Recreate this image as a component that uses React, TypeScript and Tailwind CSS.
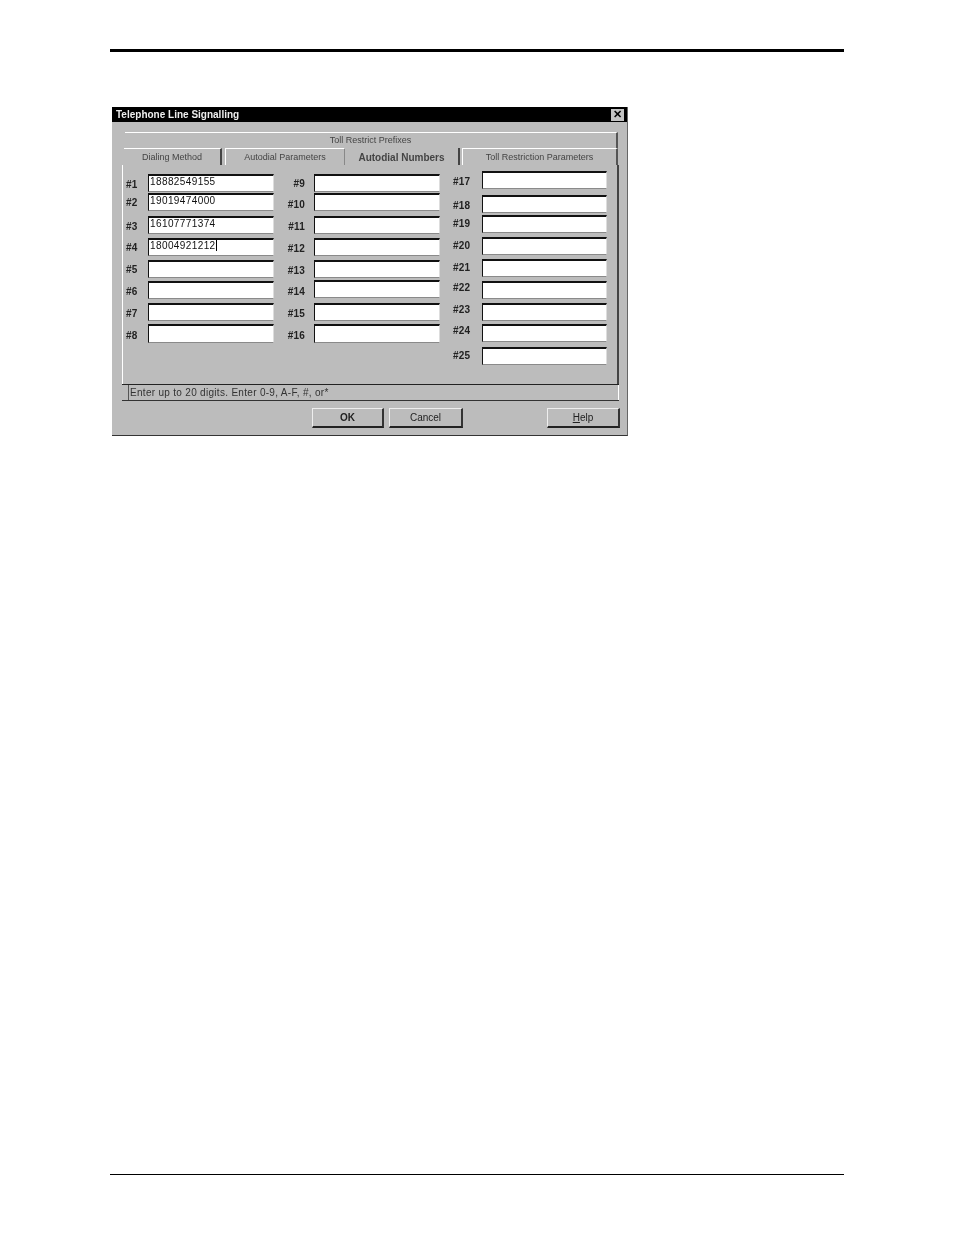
const c1 = [
  ["#1", "18882549155", "h-[18px] mt-0", "mt-[5px]"],
  ["#2", "19019474000", "h-[18px] mt-[1px]", "mt-[4px]"],
  ["#3", "16107771374", "h-[18px] mt-[5px]", "mt-[5px]"],
  ["#4", "18004921212", "h-[18px] mt-[4px]", "mt-[4px]"],
  ["#5", "", "h-[18px] mt-[4px]", "mt-[4px]"],
  ["#6", "", "h-[18px] mt-[3px]", "mt-[5px]"],
  ["#7", "", "h-[18px] mt-[4px]", "mt-[5px]"],
  ["#8", "", "h-[19px] mt-[3px]", "mt-[6px]"],
];
const c2 = [
  ["#9", "", "h-[18px] mt-0", "mt-[4px]"],
  ["#10", "", "h-[18px] mt-[1px]", "mt-[6px]"],
  ["#11", "", "h-[18px] mt-[5px]", "mt-[5px]"],
  ["#12", "", "h-[18px] mt-[4px]", "mt-[5px]"],
  ["#13", "", "h-[18px] mt-[4px]", "mt-[5px]"],
  ["#14", "", "h-[18px] mt-[2px]", "mt-[6px]"],
  ["#15", "", "h-[18px] mt-[5px]", "mt-[5px]"],
  ["#16", "", "h-[19px] mt-[3px]", "mt-[6px]"],
];
const c3 = [
  ["#17", "", "h-[18px] mt-0", "mt-[5px]"],
  ["#18", "", "h-[18px] mt-[6px]", "mt-[5px]"],
  ["#19", "", "h-[18px] mt-[2px]", "mt-[3px]"],
  ["#20", "", "h-[18px] mt-[4px]", "mt-[3px]"],
  ["#21", "", "h-[18px] mt-[4px]", "mt-[3px]"],
  ["#22", "", "h-[18px] mt-[4px]", "mt-[1px]"],
  ["#23", "", "h-[18px] mt-[4px]", "mt-[1px]"],
  ["#24", "", "h-[18px] mt-[3px]", "mt-[1px]"],
  ["#25", "", "h-[18px] mt-[5px]", "mt-[3px]"],
];

function Column({ rows, labelW, inputW, cls }: { rows: string[][]; labelW: string; inputW: string; cls: string }) {
  return (
    <div className={`flex flex-col ${cls}`}>
      {rows.map(([label, value, rowCls, labelCls]) => (
        <div key={label} className={`flex items-start ${rowCls}`}>
          <span className={`${labelW} ${labelCls} text-[10px] leading-[12px] font-bold text-[#222222] tracking-[0.2px] whitespace-nowrap`}>{label}</span>
          <div className={`${inputW} h-full bg-white border-t-2 border-l border-t-[#111111] border-l-[#111111] border-b border-r border-b-[#8a8a8a] border-r-[#dddddd] pl-[1px] text-[10px] leading-[12px] text-[#111111] tracking-[0.4px]`}>
            {label === "#4" ? <span className="border-r border-black">{value}</span> : value}
          </div>
        </div>
      ))}
    </div>
  );
}

function Tab({ children, cls }: { children: React.ReactNode; cls: string }) {
  return <div className={`flex items-center justify-center h-[17px] pt-[2px] text-[9px] text-[#444444] whitespace-nowrap ${cls}`}>{children}</div>;
}

function Btn({ children, cls }: { children: React.ReactNode; cls: string }) {
  return <div className={`flex items-center justify-center h-[20px] text-[10px] text-[#222222] border-t border-l border-t-[#eeeeee] border-l-[#eeeeee] border-b-2 border-r-2 border-b-[#222222] border-r-[#333333] ${cls}`}>{children}</div>;
}

export default function App() {
  return (
    <div className="w-[954px] h-[1235px] bg-white relative overflow-hidden font-['Liberation_Sans',Arial,sans-serif]">
      <div className="flex flex-col px-[110px] pt-[49px] w-[954px]">
        <div className="h-[3px] w-[734px] bg-black" />
        <div className="ml-[2px] mt-[55px] w-[516px] h-[329px] bg-[#bcbcbc] flex flex-col blur-[0.35px] border-b border-b-[#333333] border-r border-r-[#666666]">
          <div className="h-[15px] bg-black flex items-center justify-between pl-[4px] pr-[3px] shrink-0">
            <span className="text-[10px] font-bold text-[#eeeeee]">Telephone Line Signalling</span>
            <span className="w-[13px] h-[12px] bg-[#c4c4c4] flex items-center justify-center text-[11px] leading-none font-bold text-black">✕</span>
          </div>

          <div className="mt-[10px] ml-[13px] mr-[9px] h-[16px] border-t border-t-white border-r-2 border-r-[#555555] flex items-center justify-center text-[9px] text-[#444444] shrink-0">
            <span>Toll Restrict Prefixes</span>
          </div>

          <div className="flex ml-[12px] mr-[9px] shrink-0">
            <Tab cls="w-[98px] border-t border-t-white border-r-2 border-r-[#444444]">Dialing Method</Tab>
            <Tab cls="ml-[3px] w-[120px] border-t border-t-white border-l border-l-white border-r border-r-[#888888]">Autodial Parameters</Tab>
            <Tab cls="w-[115px] text-[10px] font-bold text-[#222222] border-r-2 border-r-[#444444]">Autodial Numbers</Tab>
            <Tab cls="ml-[2px] w-[156px] border-t border-t-white border-l border-l-white border-r-2 border-r-[#555555]">Toll Restriction Parameters</Tab>
          </div>

          <div className="ml-[10px] mr-[8px] h-[219px] border-l border-l-white border-r-2 border-r-[#444444] relative shrink-0 flex items-start pt-[9px] pl-[3px]">
            <Column rows={c1} labelW="w-[22px]" inputW="w-[126px]" cls="" />
            <Column rows={c2} labelW="w-[29px] text-right pr-[9px]" inputW="w-[126px]" cls="ml-[11px]" />
            <Column rows={c3} labelW="w-[29px]" inputW="w-[125px]" cls="ml-[13px] -mt-[3px]" />
          </div>

          <div className="ml-[10px] mr-[8px] h-[17px] border-t border-t-[#222222] border-b border-b-[#333333] pl-[6px] shrink-0">
            <div className="h-full border-l border-l-[#555555] border-r border-r-white pl-[1px] text-[10px] leading-[15px] text-[#333333] tracking-[0.3px]">
              Enter up to 20 digits. Enter 0-9, A-F, #, or*
            </div>
          </div>

          <div className="flex mt-[7px] ml-[200px] shrink-0">
            <Btn cls="w-[72px] border border-[#222222] border-b-2 border-r-2 font-bold">OK</Btn>
            <Btn cls="ml-[5px] w-[74px]">Cancel</Btn>
            <Btn cls="ml-[84px] w-[73px]"><span><span className="underline">H</span>elp</span></Btn>
          </div>
        </div>
      </div>
      <div className="absolute left-[110px] top-[1174px] w-[734px] h-[1px] bg-black" />
    </div>
  );
}
